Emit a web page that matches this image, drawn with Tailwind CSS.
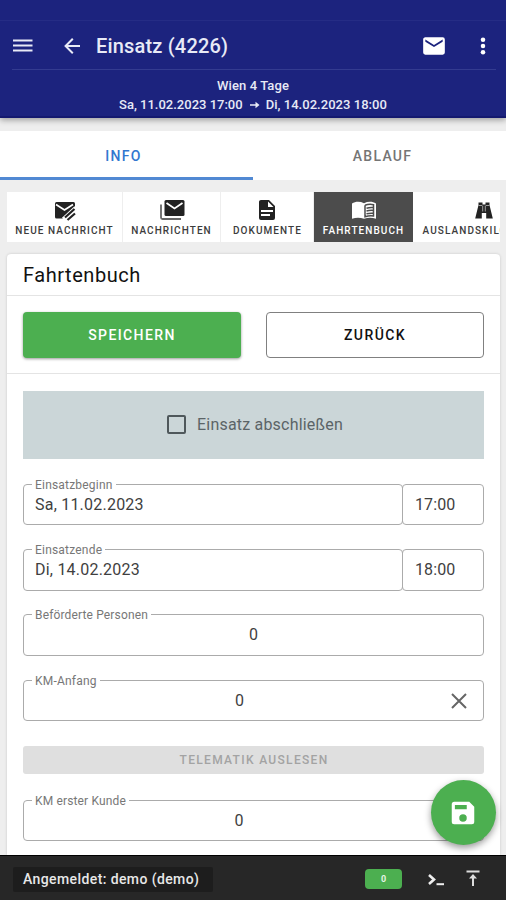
<!DOCTYPE html>
<html lang="de">
<head>
<meta charset="utf-8">
<title>Einsatz (4226)</title>
<script src="https://cdn.jsdelivr.net/npm/@tailwindcss/browser@4"></script>
</head>
<body class="w-[506px] h-[900px] overflow-hidden bg-[#eeeeee] font-['Roboto',sans-serif] text-[#222] flex flex-col relative">
<header class="h-[118px] shrink-0 bg-[#1c237e] text-[#e8eaf6] shadow-[0_2px_6px_rgba(0,0,0,0.35)] border-b-2 border-[#14196f] relative">
  <div class="h-[21px] border-b border-[#252c85]"></div>
  <div class="h-[49px] ml-3 mr-[10px] pt-px flex items-center border-b border-[#333b90]">
    <svg class="w-[22px] h-[22px]" viewBox="0 0 22 22" fill="none" stroke="currentColor" stroke-width="2"><path d="M1 5.500h19.500M1 10.500h19.500M1 15.500h19.500"/></svg>
    <svg class="ml-[26px] w-6 h-6" viewBox="0 0 24 24" fill="currentColor"><path d="M20 11v2H8l5.500 5.500-1.420 1.420L4.160 12l7.920-7.920L13.500 5.500 8 11z"/></svg>
    <h1 class="ml-3 text-[20px] leading-6 font-medium tracking-[0.180px] whitespace-nowrap">Einsatz (4226)</h1>
    <svg class="ml-auto w-[26px] h-[26px] text-white" viewBox="0 0 24 24" fill="currentColor"><path d="m20 8-8 5-8-5V6l8 5 8-5m0-2H4c-1.110 0-2 .89-2 2v12a2 2 0 0 0 2 2h16a2 2 0 0 0 2-2V6a2 2 0 0 0-2-2"/></svg>
    <svg class="ml-[23px] w-[26px] h-[26px] text-white" viewBox="0 0 24 24" fill="currentColor"><circle cx="12" cy="6.200" r="2.100"/><circle cx="12" cy="12" r="2.100"/><circle cx="12" cy="17.800" r="2.100"/></svg>
  </div>
  <div class="pt-[6px] text-center text-[13px] leading-[19px] font-medium">
    <div class="tracking-[0.100px]">Wien 4 Tage</div>
    <div class="flex justify-center items-center gap-[6px]"><span>Sa, 11.02.2023 17:00</span><svg class="w-[11px] h-2" viewBox="0 0 11 8" fill="currentColor"><path d="M1 3.200h5.500V0.800L10.500 4 6.500 7.200V4.800H1z"/></svg><span class="tracking-[0.040px]">Di, 14.02.2023 18:00</span></div>
  </div>
</header>

<nav class="mt-[13px] h-[49px] shrink-0 bg-white grid grid-cols-2 text-[14px] font-medium tracking-[1.300px] text-center leading-[50px]">
  <div class="text-[#3277cf] border-b-[3px] border-[#5189d3] pr-[6px] h-[49px]">INFO</div>
  <div class="text-[#757575] pl-[6px]">ABLAUF</div>
</nav>

<section class="mt-[12px] ml-[7px] mr-[6px] h-[50px] shrink-0 flex gap-px overflow-hidden text-[10px] font-medium tracking-[1.070px] leading-[12px] text-[#3c3c3c]">
  <div class="w-[115px] shrink-0 bg-white flex flex-col items-center pt-[7px] gap-[4px] whitespace-nowrap">
    <svg class="w-6 h-[22px]" viewBox="0 0 24 22"><path fill="#222" d="M3.500 3h17A1.500 1.500 0 0 1 22 4.500V8L11.500 19.500H3.500A1.500 1.500 0 0 1 2 18V4.500A1.500 1.500 0 0 1 3.500 3"/><path d="m3 5.500 8.500 5.500L20 5.500" fill="none" stroke="#fff" stroke-width="1.700"/><path d="M10.500 20.500 23 8.800" stroke="#fff" stroke-width="4.500"/><path d="m12 18.500 9.500-8.500m-7 11 7.500-6.500" stroke="#222" stroke-width="2.200"/></svg>
    <span>NEUE NACHRICHT</span>
  </div>
  <div class="w-[97px] shrink-0 bg-white flex flex-col items-center pt-[7px] gap-[4px] whitespace-nowrap">
    <svg class="w-[26px] h-[22px]" viewBox="0 0 26 22"><path d="M2 5.500v13a1.500 1.500 0 0 0 1.500 1.500H22" fill="none" stroke="#666" stroke-width="1.800"/><rect x="5.500" y="1" width="20" height="16" rx="1.500" fill="#222"/><path d="m7.500 4 8 5.500 8-5.500" fill="none" stroke="#fff" stroke-width="1.800"/></svg>
    <span>NACHRICHTEN</span>
  </div>
  <div class="w-[92px] shrink-0 bg-white flex flex-col items-center pt-[7px] gap-[4px] whitespace-nowrap">
    <svg class="w-6 h-[22px]" viewBox="0 1 24 22" fill="#222"><path d="M13 9h5.500L13 3.500zM6 2h8l6 6v12a2 2 0 0 1-2 2H6a2 2 0 0 1-2-2V4c0-1.110.89-2 2-2m9 16v-2H6v2zm3-4v-2H6v2z"/></svg>
    <span class="pl-px">DOKUMENTE</span>
  </div>
  <div class="w-[99px] shrink-0 bg-[#4c4c4c] text-white flex flex-col items-center pt-[7px] gap-[4px] whitespace-nowrap">
    <svg class="w-[26px] h-[22px]" viewBox="0 0 26 22"><path fill="#fff" d="M1 4.500C4.500 2.300 9 2.300 13 4.200c4-1.900 8.500-1.900 12 .3V19.800c-4-1.500-8-1.500-12 0-4-1.500-8-1.500-12 0z"/><path d="M14 6.200v11.500c3-1 6-1.300 8.500-.8V5.700c-3-.7-5.500-.5-8.500.5m1.500 3c2-.6 4-.8 7-.6m-7 3.400c2-.6 4-.8 7-.6m-7 3.400c2-.6 4-.8 7-.6" fill="none" stroke="#4c4c4c" stroke-width="1.500"/></svg>
    <span>FAHRTENBUCH</span>
  </div>
  <div class="w-[142px] shrink-0 -ml-px bg-white flex flex-col items-center pt-[7px] gap-[4px] whitespace-nowrap">
    <svg class="w-5 h-[22px]" viewBox="0 0 20 22" fill="#222"><path d="M4.500 3.500h4v2h3v-2h4v2.500l3.300 13.500h-6.600v-5.500H7.800v5.500H1.200L4.500 6z"/><path d="M8.700 6.500v6m2.600-6v6M4.500 6.500h3.500m4 0h3.500" stroke="#aaa" stroke-width=".9"/></svg>
    <span>AUSLANDSKILOMETER</span>
  </div>
</section>

<main class="mt-[12px] ml-[7px] mr-[6px] flex-1 min-h-0 overflow-hidden bg-white rounded-t-[4px] shadow-[0_0_3px_rgba(0,0,0,0.16)]">
  <h2 class="h-[42px] border-b border-[#e4e4e4] pl-4 text-[20px] leading-[42px] tracking-[0.550px] text-[#111]">Fahrtenbuch</h2>
  <div class="h-[78px] border-b border-[#e4e4e4] px-4 pt-4 flex gap-[25px] text-[14px] font-medium tracking-[1.400px]">
    <button class="w-[218px] h-[46px] rounded-[4px] bg-[#4caf50] text-white shadow-[0_1px_3px_rgba(0,0,0,0.4)]">SPEICHERN</button>
    <button class="w-[218px] h-[46px] rounded-[4px] border border-[#808080] text-[#111]">ZURÜCK</button>
  </div>
  <div class="mx-4 mt-[17px] h-[68px] pb-px pl-[3px] bg-[#cbd6d8] flex items-center justify-center text-[16px] tracking-[0.200px] text-[#5b6467]">
    <span class="w-[19px] h-[19px] mr-[11px] border-2 border-[#4f585b] rounded-[2px]"></span>Einsatz abschließen
  </div>

  <div class="mx-4 mt-[18px] flex text-[16px] leading-5 text-[#3f3f3f]">
    <fieldset class="w-[380px] h-[48px] border border-[#ababab] rounded-[4px] pl-[8px]"><legend class="px-[3px] text-[12px] leading-[14px] tracking-[0.200px] text-[#777] relative top-px">Einsatzbeginn</legend><div class="pl-[3px] pt-[4px] tracking-[0.220px]">Sa, 11.02.2023</div></fieldset>
    <div class="mt-[7px] flex-1 h-[41px] border border-[#ababab] rounded-[4px] pl-[12px] pt-[10px] -ml-px tracking-[0.100px]">17:00</div>
  </div>
  <div class="mx-4 mt-[17px] flex text-[16px] leading-5 text-[#3f3f3f]">
    <fieldset class="w-[380px] h-[49px] border border-[#ababab] rounded-[4px] pl-[8px]"><legend class="px-[3px] text-[12px] leading-[14px] tracking-[0.200px] text-[#777] relative top-px">Einsatzende</legend><div class="pl-[3px] pt-[4px] tracking-[0.220px]">Di, 14.02.2023</div></fieldset>
    <div class="mt-[7px] flex-1 h-[42px] border border-[#ababab] rounded-[4px] pl-[12px] pt-[10px] -ml-px tracking-[0.100px]">18:00</div>
  </div>
  <fieldset class="mx-4 mt-[16px] h-[49px] border border-[#ababab] rounded-[4px] pl-[8px] pr-[8px] text-[16px] leading-5 text-[#3f3f3f]"><legend class="px-[3px] text-[12px] leading-[14px] tracking-[0.150px] text-[#777] relative top-px">Beförderte Personen</legend><div class="pt-[4px] text-center">0</div></fieldset>
  <fieldset class="mx-4 mt-[17px] h-[48px] border border-[#ababab] rounded-[4px] pl-[8px] pr-[12px] text-[16px] leading-5 text-[#3f3f3f]"><legend class="px-[3px] text-[12px] leading-[14px] tracking-[0.200px] text-[#777] relative top-px">KM-Anfang</legend><div class="pt-[4px] flex items-center"><span class="flex-1 text-center">0</span><svg class="w-6 h-5" viewBox="0 2 24 20" fill="none" stroke="#666" stroke-width="2"><path d="m5 5 14 14M19 5 5 19"/></svg></div></fieldset>
  <div class="mx-4 mt-[25px] h-[28px] rounded-[3px] bg-[#dfdfdf] text-[12px] leading-[29px] font-medium tracking-[1.320px] text-center text-[#a3a3a3] pl-px">TELEMATIK AUSLESEN</div>
  <fieldset class="mx-4 mt-[19px] h-[48px] border border-[#ababab] rounded-[4px] pl-[8px] pr-[37px] text-[16px] leading-5 text-[#3f3f3f]"><legend class="px-[3px] text-[12px] leading-[14px] tracking-[0.150px] text-[#777] relative top-px">KM erster Kunde</legend><div class="pt-[4px] text-center">0</div></fieldset>
</main>

<footer class="h-[45px] shrink-0 bg-[#272727] border-t border-black relative flex items-center pl-[13px] pt-[3px] text-white">
  <div class="w-[200px] h-[25px] pl-[10px] bg-[#1d1d1d] rounded-[2px] text-[14px] font-medium leading-[25px] text-[#e8e8e8] whitespace-nowrap tracking-[0.400px]">Angemeldet: demo (demo)</div>
  <div class="ml-[152px] w-[37px] h-[20px] mb-[2px] rounded-[4px] bg-[#4caf50] text-[9px] font-bold leading-[21px] text-center text-[#e4f4e4]">0</div>
  <svg class="ml-[26px] w-[17px] h-[14px]" viewBox="0 0 17 14" fill="none" stroke="#eee" stroke-width="2.600"><path d="m1 2 5 4.500L1 11"/><path d="M8.500 11.200H16" stroke-width="2"/></svg>
  <svg class="ml-[21px] mb-[3px] w-[14px] h-[16px]" viewBox="0 0 14 16" fill="none" stroke="#ddd" stroke-width="2"><path d="M.5 1.500h13M7 16V5"/><path d="M3 8.500 7 4l4 4.500z" fill="#ddd" stroke="none"/></svg>
</footer>

<button class="absolute left-[431px] top-[780px] w-[65px] h-[65px] rounded-full bg-[#4caf50] shadow-[0_3px_7px_rgba(0,0,0,0.4)] flex items-center justify-center pr-[2px]" aria-label="Speichern">
  <svg class="w-[30px] h-[30px]" viewBox="0 0 24 24" fill="#fff"><path d="M15 9H5.500V5.500H15m-3 13.500a3 3 0 0 1-3-3 3 3 0 0 1 3-3 3 3 0 0 1 3 3 3 3 0 0 1-3 3m5-16H5a2 2 0 0 0-2 2v14a2 2 0 0 0 2 2h14a2 2 0 0 0 2-2V7z"/></svg>
</button>
</body>
</html>
